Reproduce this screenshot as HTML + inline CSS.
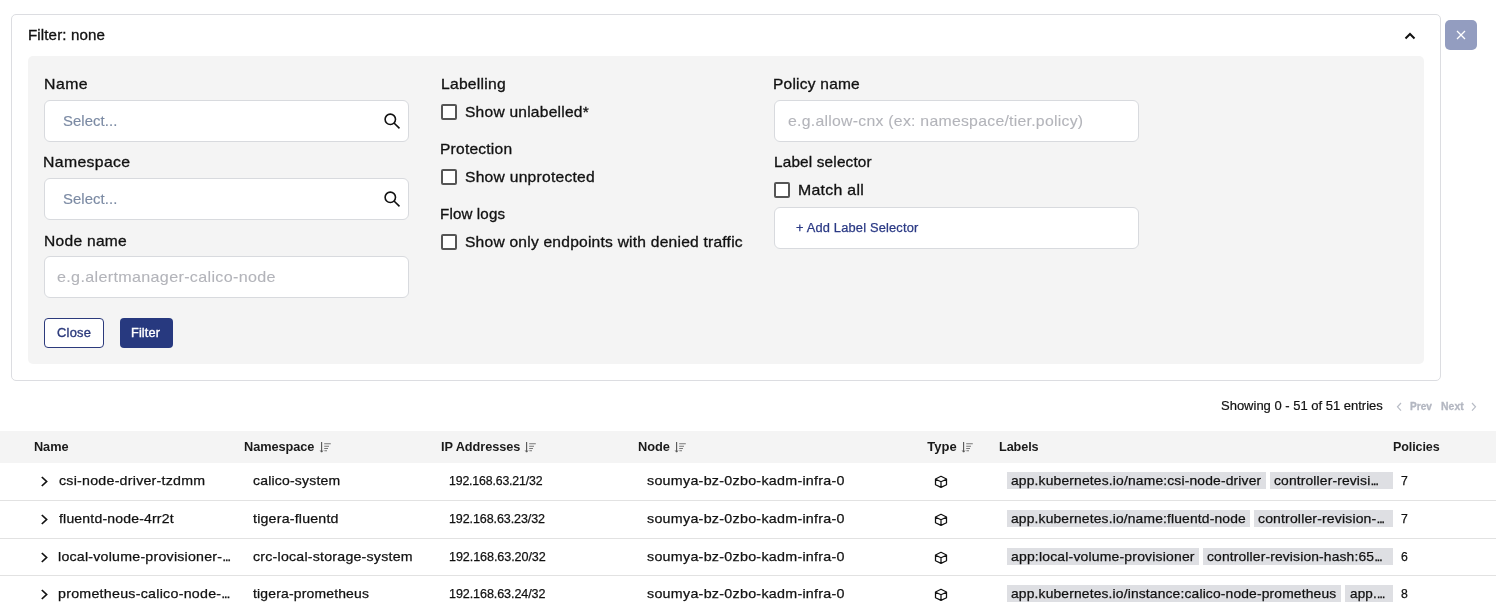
<!DOCTYPE html>
<html><head><meta charset="utf-8">
<style>
*{box-sizing:border-box;margin:0;padding:0}
html,body{width:1496px;height:603px;overflow:hidden;background:#fff}
body{position:relative;font-family:"Liberation Sans",sans-serif;color:#111;will-change:transform}
.a{position:absolute;white-space:pre;line-height:normal;-webkit-text-stroke:0.3px;transform-origin:0 0}
.box{position:absolute}
.outer{left:11px;top:14px;width:1430px;height:367px;border:1px solid #dcdde1;border-radius:5px}
.panel{left:28px;top:56px;width:1396px;height:308px;background:#f4f4f4;border-radius:5px}
.inp{position:absolute;width:365px;height:42px;background:#fff;border:1px solid #d8dade;border-radius:6px}
.cb{position:absolute;width:16px;height:16px;background:#fff;border:2px solid #555;border-radius:2px}
.sep{position:absolute;left:0;width:1496px;height:1px;background:#e2e2e2}
.chip{position:absolute;height:17px;background:#dedfe3}
svg{position:absolute;overflow:visible}
</style></head>
<body>
<div class="box outer"></div>
<svg style="left:1400px;top:28px" width="20" height="16"><path d="M5.5 10.5 L10 6 L14.5 10.5" fill="none" stroke="#111" stroke-width="2"/></svg>
<div class="box" style="left:1445px;top:20px;width:32px;height:30px;background:#939dc0;border-radius:5px"></div>
<svg style="left:1445px;top:20px" width="32" height="30"><path d="M12 11 L20 19 M20 11 L12 19" stroke="#fff" stroke-width="1.3"/></svg>
<div class="box panel"></div>

<div class="inp" style="left:44px;top:100px"></div>
<svg style="left:380px;top:110px" width="24" height="24"><circle cx="10.3" cy="9.3" r="5.2" fill="none" stroke="#111" stroke-width="1.6"/><path d="M14 13 L19.5 18.3" stroke="#111" stroke-width="1.6"/></svg>
<div class="inp" style="left:44px;top:178px"></div>
<svg style="left:380px;top:188px" width="24" height="24"><circle cx="10.3" cy="9.3" r="5.2" fill="none" stroke="#111" stroke-width="1.6"/><path d="M14 13 L19.5 18.3" stroke="#111" stroke-width="1.6"/></svg>
<div class="inp" style="left:44px;top:256px"></div>
<div class="box" style="left:44px;top:318px;width:60px;height:30px;border:1px solid #2c3a7c;border-radius:4px;background:#fff"></div>
<div class="box" style="left:120px;top:318px;width:53px;height:30px;background:#27397f;border-radius:4px"></div>

<div class="cb" style="left:441px;top:104px"></div>
<div class="cb" style="left:441px;top:169px"></div>
<div class="cb" style="left:441px;top:234px"></div>

<div class="inp" style="left:774px;top:100px"></div>
<div class="cb" style="left:774px;top:182px"></div>
<div class="inp" style="left:774px;top:207px"></div>

<svg style="left:1390px;top:398px" width="20" height="16"><path d="M11 5 L7.5 8.8 L11 12.6" fill="none" stroke="#b8bcc6" stroke-width="1.2"/></svg>
<svg style="left:1466px;top:398px" width="20" height="16"><path d="M6 5 L9.5 8.8 L6 12.6" fill="none" stroke="#b8bcc6" stroke-width="1.2"/></svg>

<div class="box" style="left:0;top:431px;width:1496px;height:32px;background:#f4f4f4"></div>
<svg style="left:320px;top:441px" width="14" height="13"><path d="M1.6 1 L1.6 11" stroke="#555" stroke-width="1.1"/><path d="M0.3 9.5 L1.6 11.2 L2.9 9.5" fill="none" stroke="#555" stroke-width="1"/><path d="M4.2 2.8 H10.8 M4.2 5.3 H9 M4.2 7.5 H8 M4.4 9.8 H7" stroke="#777" stroke-width="1.1"/></svg>
<svg style="left:525px;top:441px" width="14" height="13"><path d="M1.6 1 L1.6 11" stroke="#555" stroke-width="1.1"/><path d="M0.3 9.5 L1.6 11.2 L2.9 9.5" fill="none" stroke="#555" stroke-width="1"/><path d="M4.2 2.8 H10.8 M4.2 5.3 H9 M4.2 7.5 H8 M4.4 9.8 H7" stroke="#777" stroke-width="1.1"/></svg>
<svg style="left:675px;top:441px" width="14" height="13"><path d="M1.6 1 L1.6 11" stroke="#555" stroke-width="1.1"/><path d="M0.3 9.5 L1.6 11.2 L2.9 9.5" fill="none" stroke="#555" stroke-width="1"/><path d="M4.2 2.8 H10.8 M4.2 5.3 H9 M4.2 7.5 H8 M4.4 9.8 H7" stroke="#777" stroke-width="1.1"/></svg>
<svg style="left:962px;top:441px" width="14" height="13"><path d="M1.6 1 L1.6 11" stroke="#555" stroke-width="1.1"/><path d="M0.3 9.5 L1.6 11.2 L2.9 9.5" fill="none" stroke="#555" stroke-width="1"/><path d="M4.2 2.8 H10.8 M4.2 5.3 H9 M4.2 7.5 H8 M4.4 9.8 H7" stroke="#777" stroke-width="1.1"/></svg>
<div class="sep" style="top:500px"></div>
<div class="sep" style="top:538px"></div>
<div class="sep" style="top:575px"></div>
<svg style="left:36px;top:472px" width="16" height="17"><path d="M5.8 5 L10.6 9.5 L5.8 14" fill="none" stroke="#111" stroke-width="1.7"/></svg>
<svg style="left:933px;top:474px" width="16" height="16"><path d="M8 2.3 L13.5 5 L13.5 10.8 L8 13.4 L2.5 10.8 L2.5 5 Z M2.7 5.3 L8 7.7 L13.3 5.3 M8 7.7 L8 13.2" fill="none" stroke="#111" stroke-width="1.25" stroke-linejoin="round"/></svg>
<div class="chip" style="left:1007px;top:472px;width:259px"></div>
<div class="chip" style="left:1270px;top:472px;width:123px"></div>
<svg style="left:36px;top:510px" width="16" height="17"><path d="M5.8 5 L10.6 9.5 L5.8 14" fill="none" stroke="#111" stroke-width="1.7"/></svg>
<svg style="left:933px;top:512px" width="16" height="16"><path d="M8 2.3 L13.5 5 L13.5 10.8 L8 13.4 L2.5 10.8 L2.5 5 Z M2.7 5.3 L8 7.7 L13.3 5.3 M8 7.7 L8 13.2" fill="none" stroke="#111" stroke-width="1.25" stroke-linejoin="round"/></svg>
<div class="chip" style="left:1007px;top:510px;width:243px"></div>
<div class="chip" style="left:1254px;top:510px;width:139px"></div>
<svg style="left:36px;top:548px" width="16" height="17"><path d="M5.8 5 L10.6 9.5 L5.8 14" fill="none" stroke="#111" stroke-width="1.7"/></svg>
<svg style="left:933px;top:550px" width="16" height="16"><path d="M8 2.3 L13.5 5 L13.5 10.8 L8 13.4 L2.5 10.8 L2.5 5 Z M2.7 5.3 L8 7.7 L13.3 5.3 M8 7.7 L8 13.2" fill="none" stroke="#111" stroke-width="1.25" stroke-linejoin="round"/></svg>
<div class="chip" style="left:1007px;top:548px;width:192px"></div>
<div class="chip" style="left:1203px;top:548px;width:190px"></div>
<svg style="left:36px;top:585px" width="16" height="17"><path d="M5.8 5 L10.6 9.5 L5.8 14" fill="none" stroke="#111" stroke-width="1.7"/></svg>
<svg style="left:933px;top:587px" width="16" height="16"><path d="M8 2.3 L13.5 5 L13.5 10.8 L8 13.4 L2.5 10.8 L2.5 5 Z M2.7 5.3 L8 7.7 L13.3 5.3 M8 7.7 L8 13.2" fill="none" stroke="#111" stroke-width="1.25" stroke-linejoin="round"/></svg>
<div class="chip" style="left:1007px;top:585px;width:333.5px"></div>
<div class="chip" style="left:1345px;top:585px;width:48px"></div>
<div class="a" style="left:27.76px;top:27px;font-size:14.5px;letter-spacing:0.113px;transform:scaleX(1.0424);">Filter: none</div>
<div class="a" style="left:43.51px;top:76px;font-size:14.5px;letter-spacing:0.440px;transform:scaleX(1.0908);">Name</div>
<div class="a" style="left:62.67px;top:113px;font-size:14.5px;color:#7b8aa3;-webkit-text-stroke:0.15px;letter-spacing:0.069px;transform:scaleX(1.0266);">Select...</div>
<div class="a" style="left:43.31px;top:154px;font-size:14.5px;letter-spacing:0.331px;transform:scaleX(1.0884);">Namespace</div>
<div class="a" style="left:62.67px;top:191px;font-size:14.5px;color:#7b8aa3;-webkit-text-stroke:0.15px;letter-spacing:0.069px;transform:scaleX(1.0266);">Select...</div>
<div class="a" style="left:43.53px;top:233px;font-size:14.5px;letter-spacing:0.269px;transform:scaleX(1.0728);">Node name</div>
<div class="a" style="left:57.30px;top:269px;font-size:14.5px;color:#b3b4ba;-webkit-text-stroke:0.1px;letter-spacing:0.299px;transform:scaleX(1.1113);">e.g.alertmanager-calico-node</div>
<div class="a" style="left:57.30px;top:326px;font-size:12px;color:#2c3a7c;-webkit-text-stroke:0.35px;letter-spacing:0.223px;transform:scaleX(1.0747);">Close</div>
<div class="a" style="left:131.34px;top:326px;font-size:12px;color:#ffffff;-webkit-text-stroke:0.35px;letter-spacing:0.125px;transform:scaleX(1.0592);">Filter</div>
<div class="a" style="left:440.62px;top:76px;font-size:14.5px;letter-spacing:0.222px;transform:scaleX(1.0800);">Labelling</div>
<div class="a" style="left:464.53px;top:104px;font-size:14.5px;letter-spacing:0.216px;transform:scaleX(1.0732);">Show unlabelled*</div>
<div class="a" style="left:440.43px;top:141px;font-size:14.5px;letter-spacing:0.208px;transform:scaleX(1.0733);">Protection</div>
<div class="a" style="left:464.72px;top:169px;font-size:14.5px;letter-spacing:0.236px;transform:scaleX(1.0773);">Show unprotected</div>
<div class="a" style="left:440.46px;top:206px;font-size:14.5px;letter-spacing:0.133px;transform:scaleX(1.0432);">Flow logs</div>
<div class="a" style="left:464.52px;top:234px;font-size:14.5px;letter-spacing:0.199px;transform:scaleX(1.0762);">Show only endpoints with denied traffic</div>
<div class="a" style="left:773.43px;top:76px;font-size:14.5px;letter-spacing:0.216px;transform:scaleX(1.0691);">Policy name</div>
<div class="a" style="left:787.80px;top:113px;font-size:14.5px;color:#b3b4ba;-webkit-text-stroke:0.1px;letter-spacing:0.233px;transform:scaleX(1.0913);">e.g.allow-cnx (ex: namespace/tier.policy)</div>
<div class="a" style="left:773.84px;top:154px;font-size:14.5px;letter-spacing:0.159px;transform:scaleX(1.0574);">Label selector</div>
<div class="a" style="left:797.91px;top:182px;font-size:14.5px;letter-spacing:0.257px;transform:scaleX(1.0938);">Match all</div>
<div class="a" style="left:796.30px;top:221px;font-size:12px;color:#2b3a85;-webkit-text-stroke:0.25px;letter-spacing:0.165px;transform:scaleX(1.0706);">+ Add Label Selector</div>
<div class="a" style="left:1221.00px;top:398px;font-size:13px;-webkit-text-stroke:0.2px;letter-spacing:-0.003px;">Showing 0 - 51 of 51 entries</div>
<div class="a" style="left:1409.70px;top:401px;font-size:10px;font-weight:700;color:#b3b7c1;letter-spacing:0.020px;transform:scaleX(1.0064);">Prev</div>
<div class="a" style="left:1440.60px;top:401px;font-size:10px;font-weight:700;color:#b3b7c1;letter-spacing:0.106px;transform:scaleX(1.0350);">Next</div>
<div class="a" style="left:34.22px;top:439px;font-size:13px;font-weight:700;color:#1a1a1a;-webkit-text-stroke:0px;letter-spacing:-0.092px;transform:scaleX(0.9815);">Name</div>
<div class="a" style="left:244.32px;top:439px;font-size:13px;font-weight:700;color:#1a1a1a;-webkit-text-stroke:0px;letter-spacing:-0.069px;transform:scaleX(0.9823);">Namespace</div>
<div class="a" style="left:440.72px;top:439px;font-size:13px;font-weight:700;color:#1a1a1a;-webkit-text-stroke:0px;letter-spacing:-0.064px;transform:scaleX(0.9799);">IP Addresses</div>
<div class="a" style="left:637.81px;top:439px;font-size:13px;font-weight:700;color:#1a1a1a;-webkit-text-stroke:0px;letter-spacing:-0.061px;transform:scaleX(0.9865);">Node</div>
<div class="a" style="left:927.30px;top:439px;font-size:13px;font-weight:700;color:#1a1a1a;-webkit-text-stroke:0px;letter-spacing:-0.020px;">Type</div>
<div class="a" style="left:998.73px;top:439px;font-size:13px;font-weight:700;color:#1a1a1a;-webkit-text-stroke:0px;letter-spacing:-0.092px;transform:scaleX(0.9738);">Labels</div>
<div class="a" style="left:1392.84px;top:439px;font-size:13px;font-weight:700;color:#1a1a1a;-webkit-text-stroke:0px;letter-spacing:-0.107px;transform:scaleX(0.9650);">Policies</div>
<div class="a" style="left:58.70px;top:473px;font-size:13px;-webkit-text-stroke:0.25px;letter-spacing:0.231px;transform:scaleX(1.0912);">csi-node-driver-tzdmm</div>
<div class="a" style="left:253.20px;top:473px;font-size:13px;-webkit-text-stroke:0.25px;letter-spacing:0.195px;transform:scaleX(1.0754);">calico-system</div>
<div class="a" style="left:448.65px;top:473px;font-size:13px;-webkit-text-stroke:0.25px;letter-spacing:-0.161px;transform:scaleX(0.9468);">192.168.63.21/32</div>
<div class="a" style="left:646.60px;top:473px;font-size:13px;-webkit-text-stroke:0.25px;letter-spacing:0.253px;transform:scaleX(1.0975);">soumya-bz-0zbo-kadm-infra-0</div>
<div class="a" style="left:1011.30px;top:473px;font-size:13px;-webkit-text-stroke:0.25px;letter-spacing:0.161px;transform:scaleX(1.0645);">app.kubernetes.io/name:csi-node-driver</div>
<div class="a" style="left:1273.90px;top:473px;font-size:13px;-webkit-text-stroke:0.25px;letter-spacing:0.143px;transform:scaleX(1.0644);">controller-revisi<span style="letter-spacing:-1.3px">...</span></div>
<div class="a" style="left:1401.00px;top:473px;font-size:13px;-webkit-text-stroke:0.25px;letter-spacing:0.000px;transform:scaleX(0.9400);">7</div>
<div class="a" style="left:58.70px;top:511px;font-size:13px;-webkit-text-stroke:0.25px;letter-spacing:0.185px;transform:scaleX(1.0761);">fluentd-node-4rr2t</div>
<div class="a" style="left:253.20px;top:511px;font-size:13px;-webkit-text-stroke:0.25px;letter-spacing:0.201px;transform:scaleX(1.0887);">tigera-fluentd</div>
<div class="a" style="left:449.14px;top:511px;font-size:13px;-webkit-text-stroke:0.25px;letter-spacing:-0.108px;transform:scaleX(0.9636);">192.168.63.23/32</div>
<div class="a" style="left:646.60px;top:511px;font-size:13px;-webkit-text-stroke:0.25px;letter-spacing:0.253px;transform:scaleX(1.0975);">soumya-bz-0zbo-kadm-infra-0</div>
<div class="a" style="left:1011.30px;top:511px;font-size:13px;-webkit-text-stroke:0.25px;letter-spacing:0.160px;transform:scaleX(1.0628);">app.kubernetes.io/name:fluentd-node</div>
<div class="a" style="left:1258.00px;top:511px;font-size:13px;-webkit-text-stroke:0.25px;letter-spacing:0.166px;transform:scaleX(1.0739);">controller-revision-<span style="letter-spacing:-1.3px">...</span></div>
<div class="a" style="left:1401.00px;top:511px;font-size:13px;-webkit-text-stroke:0.25px;letter-spacing:0.000px;transform:scaleX(0.9400);">7</div>
<div class="a" style="left:57.61px;top:549px;font-size:13px;-webkit-text-stroke:0.25px;letter-spacing:0.214px;transform:scaleX(1.0909);">local-volume-provisioner-<span style="letter-spacing:-1.3px">...</span></div>
<div class="a" style="left:253.20px;top:549px;font-size:13px;-webkit-text-stroke:0.25px;letter-spacing:0.214px;transform:scaleX(1.0889);">crc-local-storage-system</div>
<div class="a" style="left:449.13px;top:549px;font-size:13px;-webkit-text-stroke:0.25px;letter-spacing:-0.091px;transform:scaleX(0.9692);">192.168.63.20/32</div>
<div class="a" style="left:646.60px;top:549px;font-size:13px;-webkit-text-stroke:0.25px;letter-spacing:0.253px;transform:scaleX(1.0975);">soumya-bz-0zbo-kadm-infra-0</div>
<div class="a" style="left:1011.30px;top:549px;font-size:13px;-webkit-text-stroke:0.25px;letter-spacing:0.179px;transform:scaleX(1.0730);">app:local-volume-provisioner</div>
<div class="a" style="left:1207.00px;top:549px;font-size:13px;-webkit-text-stroke:0.25px;letter-spacing:0.150px;transform:scaleX(1.0631);">controller-revision-hash:65<span style="letter-spacing:-1.3px">...</span></div>
<div class="a" style="left:1401.00px;top:549px;font-size:13px;-webkit-text-stroke:0.25px;letter-spacing:0.000px;transform:scaleX(0.9400);">6</div>
<div class="a" style="left:57.61px;top:586px;font-size:13px;-webkit-text-stroke:0.25px;letter-spacing:0.239px;transform:scaleX(1.0940);">prometheus-calico-node-<span style="letter-spacing:-1.3px">...</span></div>
<div class="a" style="left:253.20px;top:586px;font-size:13px;-webkit-text-stroke:0.25px;letter-spacing:0.182px;transform:scaleX(1.0693);">tigera-prometheus</div>
<div class="a" style="left:449.13px;top:586px;font-size:13px;-webkit-text-stroke:0.25px;letter-spacing:-0.097px;transform:scaleX(0.9671);">192.168.63.24/32</div>
<div class="a" style="left:646.60px;top:586px;font-size:13px;-webkit-text-stroke:0.25px;letter-spacing:0.253px;transform:scaleX(1.0975);">soumya-bz-0zbo-kadm-infra-0</div>
<div class="a" style="left:1011.30px;top:586px;font-size:13px;-webkit-text-stroke:0.25px;letter-spacing:0.157px;transform:scaleX(1.0627);">app.kubernetes.io/instance:calico-node-prometheus</div>
<div class="a" style="left:1349.90px;top:586px;font-size:13px;-webkit-text-stroke:0.25px;letter-spacing:0.135px;transform:scaleX(1.0392);">app.<span style="letter-spacing:-1.3px">...</span></div>
<div class="a" style="left:1401.00px;top:586px;font-size:13px;-webkit-text-stroke:0.25px;letter-spacing:0.000px;transform:scaleX(0.9400);">8</div>
</body></html>
